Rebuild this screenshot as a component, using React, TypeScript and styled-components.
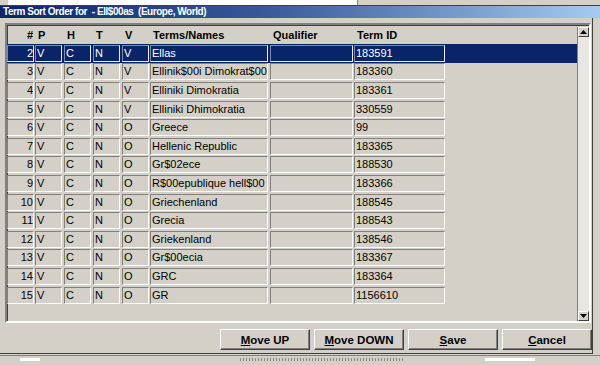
import styled, { createGlobalStyle } from 'styled-components';

const GlobalStyle = createGlobalStyle`
  html, body {
    margin: 0;
    padding: 0;
    background: #d4d0c8;
  }
  body {
    font-family: "Liberation Sans", Arial, sans-serif;
    font-size: 11px;
  }
`;

type Col = { key: string; label: string; w: number; gap: number; right?: boolean };

const columns: Col[] = [
  { key: 'n', label: '#', w: 27, gap: 0, right: true },
  { key: 'p', label: 'P', w: 27, gap: 1 },
  { key: 'h', label: 'H', w: 27, gap: 2 },
  { key: 't', label: 'T', w: 27, gap: 2 },
  { key: 'v', label: 'V', w: 27, gap: 2 },
  { key: 'term', label: 'Terms/Names', w: 118, gap: 1 },
  { key: 'q', label: 'Qualifier', w: 83, gap: 2 },
  { key: 'id', label: 'Term ID', w: 91, gap: 1 },
];

const rows = [
  ['2', 'V', 'C', 'N', 'V', 'Ellas', '', '183591'],
  ['3', 'V', 'C', 'N', 'V', 'Ellinik$00i Dimokrat$00', '', '183360'],
  ['4', 'V', 'C', 'N', 'V', 'Elliniki Dimokratia', '', '183361'],
  ['5', 'V', 'C', 'N', 'V', 'Elliniki Dhimokratia', '', '330559'],
  ['6', 'V', 'C', 'N', 'O', 'Greece', '', '99'],
  ['7', 'V', 'C', 'N', 'O', 'Hellenic Republic', '', '183365'],
  ['8', 'V', 'C', 'N', 'O', 'Gr$02ece', '', '188530'],
  ['9', 'V', 'C', 'N', 'O', 'R$00epublique hell$00', '', '183366'],
  ['10', 'V', 'C', 'N', 'O', 'Griechenland', '', '188545'],
  ['11', 'V', 'C', 'N', 'O', 'Grecia', '', '188543'],
  ['12', 'V', 'C', 'N', 'O', 'Griekenland', '', '138546'],
  ['13', 'V', 'C', 'N', 'O', 'Gr$00ecia', '', '183367'],
  ['14', 'V', 'C', 'N', 'O', 'GRC', '', '183364'],
  ['15', 'V', 'C', 'N', 'O', 'GR', '', '1156610'],
];

const buttons = [
  { hot: 'M', rest: 'ove UP' },
  { hot: 'M', rest: 'ove DOWN' },
  { hot: 'S', rest: 'ave' },
  { hot: 'C', rest: 'ancel' },
];

export default function App() {
  return (
    <Screen>
      <GlobalStyle />
      <TopStrip>
        <BehindField />
      </TopStrip>
      <TitleBar>Term Sort Order for&nbsp; - Ell$00as&nbsp; (Europe, World)</TitleBar>
      <Dialog>
        <GridFrame>
          <Table>
            <HeaderRow>
              {columns.map((c) => (
                <HeaderCell key={c.key} $w={c.w} $gap={c.gap} $right={c.right}>
                  {c.label}
                </HeaderCell>
              ))}
            </HeaderRow>
            {rows.map((r, i) => (
              <Row key={r[0]} $selected={i === 0}>
                {columns.map((c, j) => (
                  <Cell key={c.key} $w={c.w} $gap={c.gap} $right={c.right} $selected={i === 0}>
                    {r[j]}
                  </Cell>
                ))}
              </Row>
            ))}
          </Table>
          <ScrollBar>
            <ScrollButton>
              <svg width="7" height="4" viewBox="0 0 7 4">
                <path d="M3.5 0 L7 4 L0 4 Z" fill="#000" />
              </svg>
            </ScrollButton>
            <Track />
            <ScrollButton>
              <svg width="7" height="4" viewBox="0 0 7 4">
                <path d="M0 0 L7 0 L3.5 4 Z" fill="#000" />
              </svg>
            </ScrollButton>
          </ScrollBar>
        </GridFrame>
        <ButtonRow>
          {buttons.map((b) => (
            <Button key={b.rest}>
              <u>{b.hot}</u>
              {b.rest}
            </Button>
          ))}
        </ButtonRow>
      </Dialog>
      <BottomStrip>
        <BehindBit $left={20} $w={20} />
        <BehindMarks />
        <BehindBit $left={485} $w={50} />
      </BottomStrip>
    </Screen>
  );
}

const Screen = styled.div`
  width: 600px;
  height: 365px;
  overflow: hidden;
  display: flex;
  flex-direction: column;
  background: #d4d0c8;
  color: #000;
`;

const TopStrip = styled.div`
  height: 5px;
  border-bottom: 1px solid #404040;
  display: flex;
  padding-left: 8px;
`;

const BehindField = styled.div`
  width: 349px;
  height: 5px;
  background: #fff;
  border-right: 1px solid #808080;
`;

const TitleBar = styled.div`
  height: 12px;
  line-height: 12px;
  padding-left: 3px;
  background: linear-gradient(90deg, #0a246a 0%, #3a5a9a 45%, #a6caf0 100%);
  color: #fff;
  font-weight: bold;
  font-size: 10px;
  letter-spacing: -0.45px;
  white-space: nowrap;
`;

const Dialog = styled.div`
  width: 592px;
  padding: 5px 0 3px 0;
  border-right: 1px solid #404040;
  border-bottom: 1px solid #404040;
  display: flex;
  flex-direction: column;
`;

const GridFrame = styled.div`
  margin-left: 5px;
  width: 586px;
  height: 300px;
  box-sizing: border-box;
  border-style: solid;
  border-width: 2px;
  border-color: #808080 #fff #fff #808080;
  box-shadow: inset 1px 1px 0 #404040;
  display: flex;
`;

const Table = styled.div`
  flex: 1;
  display: flex;
  flex-direction: column;
`;

const HeaderRow = styled.div`
  height: 19px;
  display: flex;
  align-items: center;
  font-weight: bold;
`;

const HeaderCell = styled.div<{ $w: number; $gap: number; $right?: boolean }>`
  width: ${(p) => p.$w}px;
  margin-left: ${(p) => p.$gap}px;
  box-sizing: border-box;
  padding: 0 ${(p) => (p.$right ? 1 : 0)}px 0 ${(p) => (p.$right ? 0 : 3)}px;
  text-align: ${(p) => (p.$right ? 'right' : 'left')};
  white-space: nowrap;
`;

const Row = styled.div<{ $selected: boolean }>`
  height: 18.6px;
  display: flex;
  align-items: center;
  background: ${(p) => (p.$selected ? '#0a246a' : 'transparent')};
`;

const Cell = styled.div<{ $w: number; $gap: number; $right?: boolean; $selected: boolean }>`
  width: ${(p) => p.$w}px;
  margin-left: ${(p) => p.$gap}px;
  height: 17px;
  line-height: 15px;
  box-sizing: border-box;
  border: 1px solid;
  border-color: ${(p) =>
    p.$selected ? '#7f8aa8 #e8ecf4 #e8ecf4 #7f8aa8' : '#808080 #fff #fff #808080'};
  padding: 0 ${(p) => (p.$right ? 0 : 1)}px 0 ${(p) => (p.$right ? 0 : 1)}px;
  text-align: ${(p) => (p.$right ? 'right' : 'left')};
  color: ${(p) => (p.$selected ? '#fff' : '#000')};
  background: ${(p) => (p.$selected ? '#0a246a' : '#d4d0c8')};
  white-space: nowrap;
  overflow: hidden;
`;

const ScrollBar = styled.div`
  width: 11px;
  margin-top: 2px;
  display: flex;
  flex-direction: column;
  border-left: 1px solid #808080;
`;

const ScrollButton = styled.div`
  height: 10px;
  box-sizing: border-box;
  display: flex;
  align-items: center;
  justify-content: center;
  background: #d4d0c8;
  border: 1px solid;
  border-color: #fff #404040 #404040 #fff;
`;

const Track = styled.div`
  flex: 1;
  background: #e9e7e3;
`;

const ButtonRow = styled.div`
  margin-top: 6px;
  display: flex;
  justify-content: flex-end;
  gap: 4px;
`;

const Button = styled.div`
  width: 90px;
  height: 21px;
  box-sizing: border-box;
  display: flex;
  align-items: center;
  justify-content: center;
  font-weight: bold;
  font-size: 11.5px;
  background: #d4d0c8;
  border: 1px solid;
  border-color: #fff #404040 #404040 #fff;
  box-shadow: inset -1px -1px 0 #808080;
`;

const BottomStrip = styled.div`
  position: relative;
  flex: 1;
  margin-top: 1px;
  border-top: 1px solid #808080;
  overflow: hidden;
`;

const BehindBit = styled.div<{ $left: number; $w: number }>`
  position: absolute;
  top: 2px;
  left: ${(p) => p.$left}px;
  width: ${(p) => p.$w}px;
  height: 3px;
  background: #fff;
`;

const BehindMarks = styled.div`
  position: absolute;
  top: 2px;
  left: 240px;
  width: 165px;
  height: 3px;
  background: repeating-linear-gradient(90deg, #6a6a6a 0 1px, transparent 1px 3px);
  opacity: 0.7;
`;
